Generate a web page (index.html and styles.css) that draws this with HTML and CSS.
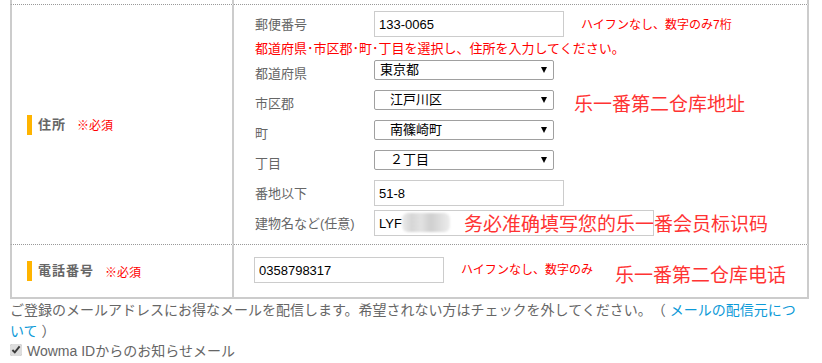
FILE: index.html
```html
<!DOCTYPE html>
<html lang="ja">
<head>
    <meta charset="UTF-8">
    <meta name="viewport" content="width=device-width, initial-scale=1.0">
    <title>会員情報</title>
    <link rel="stylesheet" href="styles.css">
</head>
<body>
    <div class="page">
        <table class="form-table">
            <tr class="row-cut">
                <th></th>
                <td></td>
            </tr>
            <tr>
                <th><span class="head">住所</span><span class="req">※必須</span></th>
                <td class="address">
                    <div class="field">
                        <label class="field-label">郵便番号</label>
                        <input class="text-input" type="text" value="133-0065">
                        <span class="hint">ハイフンなし、数字のみ7桁</span>
                    </div>
                    <p class="notice">都道府県･市区郡･町･丁目を選択し、住所を入力してください。</p>
                    <div class="field">
                        <label class="field-label">都道府県</label>
                        <div class="select"><span>東京都</span><span class="arrow"></span></div>
                    </div>
                    <div class="field">
                        <label class="field-label">市区郡</label>
                        <div class="select"><span class="indent">江戸川区</span><span class="arrow"></span></div>
                        <span class="memo">乐一番第二仓库地址</span>
                    </div>
                    <div class="field">
                        <label class="field-label">町</label>
                        <div class="select"><span class="indent">南篠崎町</span><span class="arrow"></span></div>
                    </div>
                    <div class="field">
                        <label class="field-label">丁目</label>
                        <div class="select"><span class="indent">２丁目</span><span class="arrow"></span></div>
                    </div>
                    <div class="field">
                        <label class="field-label">番地以下</label>
                        <input class="text-input" type="text" value="51-8">
                    </div>
                    <div class="field">
                        <label class="field-label">建物名など(任意)</label>
                        <div class="input-wrap">
                            <input class="text-input wide" type="text" value="LYF">
                            <span class="blur"></span>
                            <span class="memo memo-over">务必准确填写您的乐一番会员标识码</span>
                        </div>
                    </div>
                </td>
            </tr>
            <tr class="row-last">
                <th><span class="head">電話番号</span><span class="req">※必須</span></th>
                <td class="phone">
                    <div class="phone-field">
                        <input class="text-input" type="text" value="0358798317">
                        <span class="hint">ハイフンなし、数字のみ</span>
                        <span class="memo memo-phone">乐一番第二仓库电话</span>
                    </div>
                </td>
            </tr>
        </table>

        <p class="mail-note">ご登録のメールアドレスにお得なメールを配信します。希望されない方はチェックを外してください。（ <a href="#">メールの配信元について</a> ）</p>
        <label class="mail-opt"><input type="checkbox" checked>Wowma IDからのお知らせメール</label>
    </div>
</body>
</html>
```

FILE: styles.css
```css
body {
    margin: 0;
    font-family: "Liberation Sans", "Noto Sans CJK JP", sans-serif;
    color: #666;
    text-spacing-trim: space-all;
}

.page {
    width: 800px;
    padding-left: 10px;
}

.form-table {
    width: 799px;
    border-collapse: separate;
    border-spacing: 0;
    table-layout: fixed;
}

.form-table th,
.form-table td {
    padding: 0;
    border-top: 1px dotted #999;
    border-right: 2px solid #ccc;
}

.form-table th {
    box-sizing: border-box;
    width: 224px;
    border-left: 2px solid #ccc;
    padding-left: 15px;
    text-align: left;
    vertical-align: middle;
    font-weight: normal;
}

.row-cut th,
.row-cut td {
    height: 4px;
    border-top: none;
}

.row-last th,
.row-last td {
    border-bottom: 2px solid #ccc;
}

.head {
    display: inline-block;
    border-left: 5px solid #ffb400;
    padding-left: 6px;
    line-height: 20px;
    font-size: 13px;
    font-weight: bold;
    letter-spacing: 1px;
    color: #666;
    vertical-align: middle;
}

.req {
    margin-left: 11px;
    font-size: 12px;
    color: #f00;
    vertical-align: middle;
}

/* 住所 */
.address {
    padding: 3px 0 7px 21px !important;
    vertical-align: top;
}

.field {
    display: flex;
    align-items: flex-start;
    height: 30px;
}

.field-label {
    width: 119px;
    flex-shrink: 0;
    padding-top: 8px;
    line-height: 18px;
    font-size: 13px;
    color: #666;
}

.text-input {
    box-sizing: border-box;
    width: 190px;
    height: 26px;
    margin: 3px 0 0;
    padding: 0 4px;
    border: 1px solid #ccc;
    font-family: "Liberation Sans", "Noto Sans CJK JP", sans-serif;
    font-size: 13px;
    color: #000;
    outline: none;
}

.text-input.wide {
    width: 280px;
    margin: 0;
}

.hint {
    margin-left: 17px;
    padding-top: 8px;
    line-height: 18px;
    font-size: 12px;
    color: #f00;
}

.notice {
    margin: 0;
    height: 19px;
    padding-top: 2px;
    box-sizing: border-box;
    line-height: 17px;
    font-size: 13px;
    color: #f00;
}

.select {
    box-sizing: border-box;
    width: 180px;
    height: 20px;
    margin-top: 3px;
    padding: 0 6px 0 5px;
    border: 1px solid #a0a0a0;
    border-radius: 2px;
    display: flex;
    align-items: center;
    justify-content: space-between;
    font-size: 13px;
    line-height: 18px;
    color: #000;
    background: #fff;
}

.select .indent {
    margin-left: 10px;
}

.arrow {
    width: 0;
    height: 0;
    border-left: 3.5px solid transparent;
    border-right: 3.5px solid transparent;
    border-top: 6px solid #000;
}

.memo {
    margin-left: 20px;
    padding-top: 4px;
    line-height: 24px;
    font-family: "Noto Sans CJK SC", sans-serif;
    font-size: 19px;
    color: #f33;
    white-space: nowrap;
}

.input-wrap {
    position: relative;
    margin-top: 3px;
}

.blur {
    position: absolute;
    left: 28px;
    top: 3px;
    width: 48px;
    height: 19px;
    border-radius: 6px;
    background: linear-gradient(90deg, #ececec 0%, #d6d6d6 20%, #e2e2e2 40%, #cfcfcf 60%, #dedede 80%, #ededed 100%);
    filter: blur(1px);
}

.memo-over {
    position: absolute;
    left: 90px;
    top: 1px;
    margin: 0;
    padding: 0;
}

/* 電話番号 */
.phone {
    padding: 12px 0 14px 20px !important;
    vertical-align: top;
}

.phone-field {
    display: flex;
    align-items: center;
    height: 26px;
}

.phone-field .text-input {
    margin: 0;
}

.phone-field .hint {
    padding-top: 0;
}

.memo-phone {
    margin-left: 22px;
    padding-top: 7px;
}

.mail-note {
    width: 797px;
    margin: 0;
    padding-top: 1px;
    font-size: 14px;
    line-height: 21px;
    color: #666;
}

.mail-note a {
    color: #0c9ad8;
    text-decoration: none;
}

.mail-opt {
    display: flex;
    align-items: center;
    gap: 5px;
    height: 16px;
    font-size: 14px;
    color: #666;
}

.mail-opt input {
    width: 12px;
    height: 12px;
    margin: 0;
    accent-color: #ddd;
}
```
